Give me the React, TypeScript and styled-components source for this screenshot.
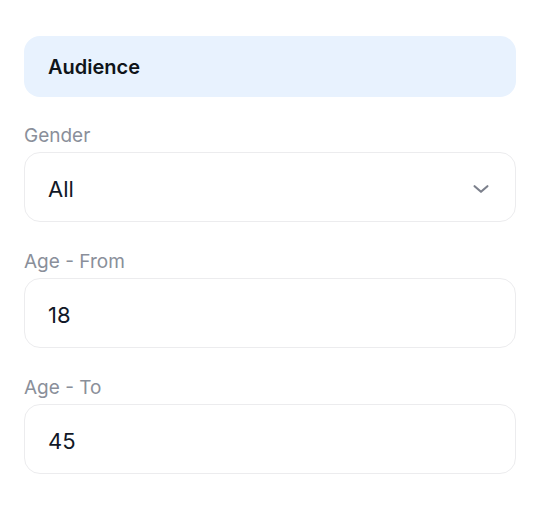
import styled, { createGlobalStyle } from "styled-components";

const GlobalStyle = createGlobalStyle`
  * { box-sizing: border-box; }
  body {
    margin: 0;
    background: #ffffff;
    font-family: Inter, "Noto Sans", sans-serif;
    color: #111827;
  }
`;

const Page = styled.div`
  width: 540px;
  padding: 36px 24px 24px;
  display: flex;
  flex-direction: column;
`;

const SectionHeader = styled.div`
  height: 61px;
  background: #e8f2fe;
  border-radius: 16px;
  padding: 0 24px;
  display: flex;
  align-items: center;
  font-size: 20px;
  font-weight: 600;
  color: #0f1419;
  margin-bottom: 25px;
`;

const Field = styled.div`
  display: flex;
  flex-direction: column;
  margin-bottom: 26px;
`;

const Label = styled.label`
  font-size: 19px;
  line-height: 22px;
  color: #8a8f9a;
  padding-top: 3px;
  margin-bottom: 5px;
`;

const Box = styled.div`
  height: 70px;
  border: 1px solid #ececee;
  border-radius: 16px;
  padding: 3px 23px 0;
  display: flex;
  align-items: center;
  justify-content: space-between;
  font-size: 22px;
  color: #111827;
`;

const Chevron = () => (
  <svg width="22" height="22" viewBox="0 0 24 24" fill="none" stroke="#7c808c" strokeWidth="2.4" strokeLinecap="round" strokeLinejoin="round">
    <path d="M5 9l7 6 7-6" />
  </svg>
);

export default function App() {
  return (
    <>
      <GlobalStyle />
      <Page>
        <SectionHeader>Audience</SectionHeader>
        <Field>
          <Label>Gender</Label>
          <Box>
            <span>All</span>
            <Chevron />
          </Box>
        </Field>
        <Field>
          <Label>Age - From</Label>
          <Box>18</Box>
        </Field>
        <Field>
          <Label>Age - To</Label>
          <Box>45</Box>
        </Field>
      </Page>
    </>
  );
}
